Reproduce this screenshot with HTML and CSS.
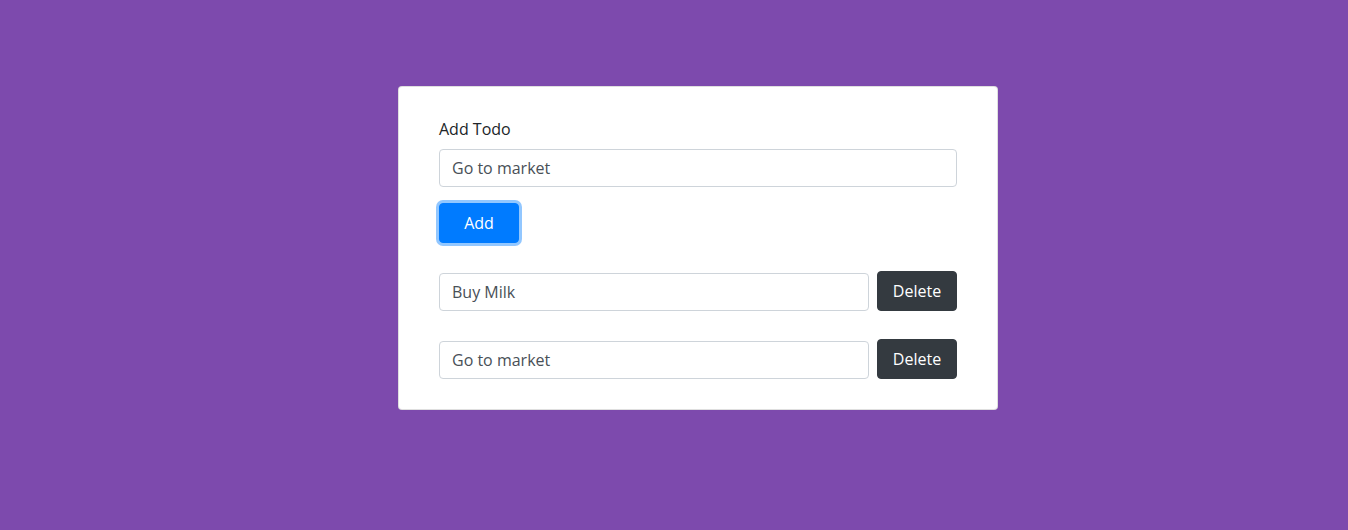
FILE: index.html
```html
<!DOCTYPE html>
<html lang="en">
<head>
<meta charset="utf-8">
<title>Todo</title>
<link rel="stylesheet" href="styles.css">
</head>
<body>
<div class="page">
  <div class="card">
    <form class="add-form">
      <label class="label" for="todo">Add Todo</label>
      <input class="input" id="todo" type="text" value="Go to market">
      <button class="btn btn-primary" type="button">Add</button>
    </form>
    <ul class="list">
      <li class="row">
        <input class="input" type="text" value="Buy Milk">
        <button class="btn btn-dark" type="button">Delete</button>
      </li>
      <li class="row">
        <input class="input" type="text" value="Go to market">
        <button class="btn btn-dark" type="button">Delete</button>
      </li>
    </ul>
  </div>
</div>
</body>
</html>
```

FILE: styles.css
```css
* { box-sizing: border-box; }
html, body {
  margin: 0;
  height: 100%;
}
body {
  background: #7d4aad;
  font-family: "Open Sans", "Noto Sans", "Liberation Sans", sans-serif;
  font-size: 16px;
  line-height: 24px;
  color: #212529;
}
.page {
  display: flex;
  justify-content: center;
  padding: 86px 0 0 48px;
}
.card {
  width: 600px;
  background: #fff;
  border: 1px solid rgba(0,0,0,.125);
  border-radius: 4px;
  padding: 30px 40px;
}
.add-form {
  display: flex;
  flex-direction: column;
  align-items: flex-start;
}
.label {
  display: block;
  margin-bottom: 8px;
  height: 24px;
}
.input {
  display: block;
  width: 100%;
  height: 38px;
  padding: 6px 12px;
  font: inherit;
  color: #495057;
  background: #fff;
  border: 1px solid #ced4da;
  border-radius: 4px;
  margin: 0;
}
.add-form .input { margin-bottom: 16px; }
.btn {
  font: inherit;
  height: 40px;
  width: 80px;
  border-radius: 4px;
  border: 1px solid transparent;
  color: #fff;
  padding: 0;
  cursor: pointer;
}
.btn-primary {
  background: #007bff;
  border-color: #007bff;
  box-shadow: 0 0 0 3px rgba(38,143,255,.5);
}
.btn-dark {
  background: #343a40;
  border-color: #343a40;
}
.list {
  list-style: none;
  margin: 0;
  padding: 0;
}
.row {
  display: flex;
  align-items: flex-end;
  gap: 8px;
  margin-top: 28px;
}
.row .input { flex: 1; }
```
